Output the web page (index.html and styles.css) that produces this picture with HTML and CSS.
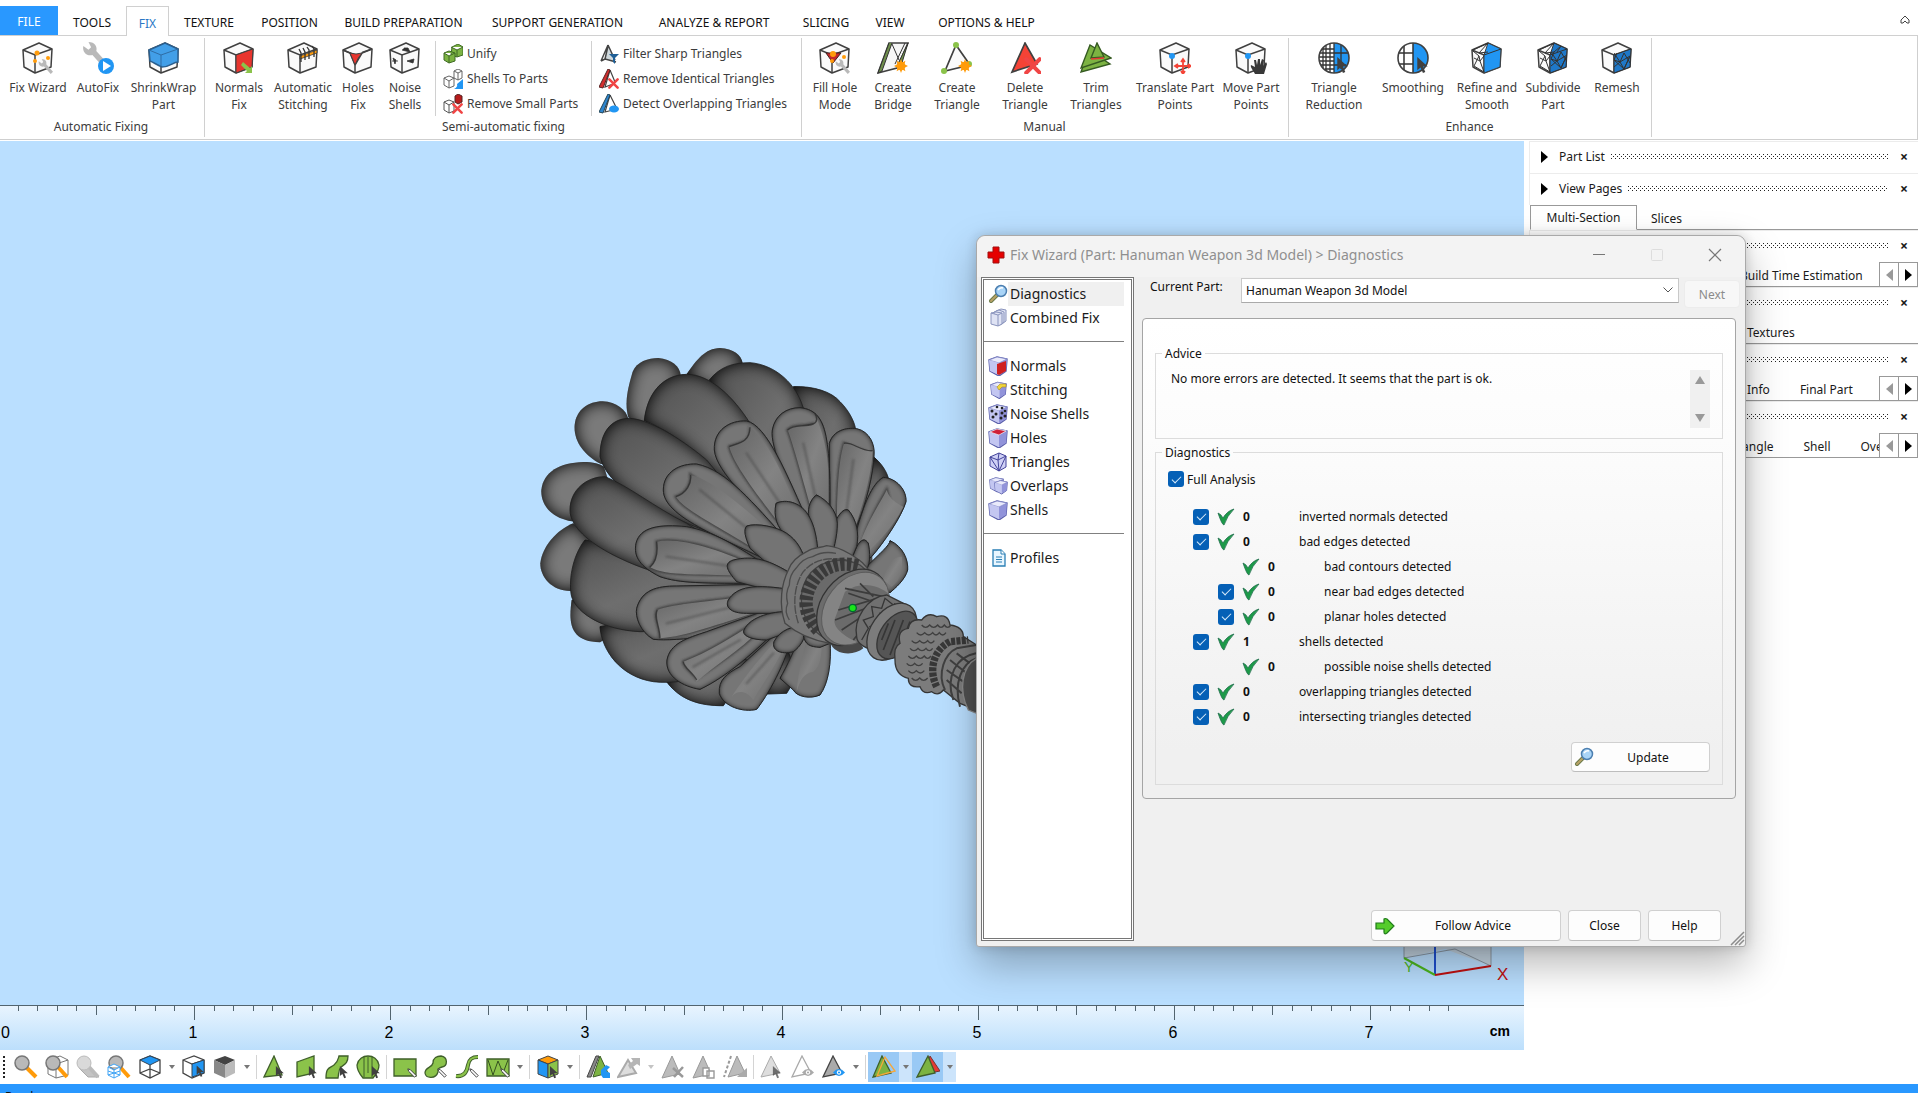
FILE: index.html
```html
<!DOCTYPE html>
<html lang="en">
<head>
<meta charset="utf-8">
<title>Fix Wizard</title>
<link rel="stylesheet" href="styles.css">
</head>
<body>

<svg class="defs" aria-hidden="true">
  <defs>
    <symbol id="cube" viewBox="0 0 32 32"><path d="M17 1 30 7 29 25 13 31 2 25 1 8Z" fill="#fafafa" stroke="#404040" stroke-width="1.5" stroke-linejoin="round"/><path d="M1 8 13 13 30 7M13 13V31" fill="none" stroke="#404040" stroke-width="1.5"/></symbol>
    <symbol id="wrench" viewBox="0 0 20 20"><path d="M1 3 5 6 7 4 5 0C10 0 12 4 11 7L20 17 17 20 8 10C4 11 0 8 1 3Z" fill="#b9b9b9"/></symbol>
    <symbol id="cross" viewBox="0 0 16 16"><path d="M2 2 14 14M14 2 2 14" stroke="#f04545" stroke-width="3.6" stroke-linecap="round"/></symbol>
    <symbol id="spark" viewBox="0 0 16 16"><path d="M8 0 9.500 4 13 2 12 6 16 8 12 10 13 14 9.500 12 8 16 6.500 12 3 14 4 10 0 8 4 6 3 2 6.500 4Z" fill="#ff9b0a"/><circle cx="8" cy="8" r="5" fill="#ff9b0a"/></symbol>
    <symbol id="cursor" viewBox="0 0 12 18"><path d="M1 0V14L4.500 11 7 17 9.500 16 7 10H12Z" fill="#404040"/></symbol>
    <symbol id="pen" viewBox="0 0 12 12"><path d="M1 1 4 2 11 9 9 11 2 4Z" fill="#fff" stroke="#404040" stroke-width="1.200"/></symbol>
    <symbol id="lens" viewBox="0 0 20 20"><path d="M9 11 3 17" stroke="#6b7a4a" stroke-width="4" stroke-linecap="round"/><path d="M9 11 3 17" stroke="#b9a266" stroke-width="2" stroke-linecap="round"/><circle cx="13" cy="7" r="5.500" fill="#a9d4f7" stroke="#4c7fb0" stroke-width="1.500"/><path d="M10 6Q12 3 15 4" stroke="#fff" stroke-width="1.500" fill="none"/></symbol>
    <symbol id="block" viewBox="0 0 20 20"><path d="M1 4 9 1 19 3 18 15 11 20 2 15Z" fill="#c3c5ee" stroke="#5c61ac" stroke-width="1.400"/><path d="M11 7 19 3 18 15 11 19Z" fill="#9193da"/><path d="M1 4 9 1 19 3 11 7Z" fill="#e9eafb" stroke="#7d82c4" stroke-width=".7"/><path d="M1 4 11 7V19L2 15Z" fill="#c3c6f1"/></symbol>
    <symbol id="tick" viewBox="0 0 18 18"><path d="M1 5Q4 6 6 10 10 3 17 1 10 8 7 17 5 17 1 5Z" fill="#1c9a48" stroke="#226f4e" stroke-width=".8"/></symbol>
    <symbol id="eye" viewBox="0 0 14 10"><path d="M0 5Q7-3 14 5 7 13 0 5Z" fill="currentColor"/><circle cx="7" cy="5" r="2.500" fill="#fff"/><circle cx="7" cy="5" r="1.300" fill="currentColor"/></symbol>
    <symbol id="mesh" viewBox="0 0 16 16"><path d="M0 0 6 9 16 3 10 16 6 9 0 14M0 7 6 9 10 0 16 10M3 0 0 7 10 16 16 3" fill="none" stroke="#333" stroke-width="1"/></symbol>
    <filter id="bulge" x="-10%" y="-10%" width="120%" height="120%" color-interpolation-filters="sRGB"><feGaussianBlur in="SourceAlpha" stdDeviation="24"/><feComponentTransfer><feFuncA type="table" tableValues="1 .5 0"/></feComponentTransfer><feComposite in2="SourceAlpha" operator="in" result="s"/><feMerge><feMergeNode in="SourceGraphic"/><feMergeNode in="s"/></feMerge></filter>
    <filter id="bevel" x="-10%" y="-10%" width="120%" height="120%" color-interpolation-filters="sRGB"><feGaussianBlur in="SourceAlpha" stdDeviation="8"/><feComponentTransfer><feFuncA type="table" tableValues="1 .45 0"/></feComponentTransfer><feComposite in2="SourceAlpha" operator="in" result="s"/><feMerge><feMergeNode in="SourceGraphic"/><feMergeNode in="s"/></feMerge></filter>
    <filter id="soft" x="-5%" y="-5%" width="110%" height="110%"><feGaussianBlur stdDeviation="3"/></filter>
    <linearGradient id="plane" x1="0" y1="0" x2="1" y2="1"><stop offset="0" stop-color="#646464"/><stop offset=".5" stop-color="#838383"/><stop offset="1" stop-color="#6c6c6c"/></linearGradient>
    <linearGradient id="lobe" x1="0" y1="0" x2="1" y2="1"><stop offset="0" stop-color="#505050"/><stop offset=".45" stop-color="#6e6e6e"/><stop offset="1" stop-color="#5c5c5c"/></linearGradient>
  </defs>
</svg>

<nav class="tabs">
  <button class="tab file">FILE</button><button class="tab w68">TOOLS</button><button class="tab w43 active">FIX</button><button class="tab w80">TEXTURE</button><button class="tab w81">POSITION</button><button class="tab w147">BUILD PREPARATION</button><button class="tab w161">SUPPORT GENERATION</button><button class="tab w152">ANALYZE &amp; REPORT</button><button class="tab w72">SLICING</button><button class="tab w56">VIEW</button><button class="tab w137">OPTIONS &amp; HELP</button>
  <button class="collapse" aria-label="Collapse ribbon"><svg width="10" height="10" viewBox="0 0 10 10"><path d="M1 5 5 1 9 5V8H7L5 6 3 8H1Z" fill="none" stroke="#444"/></svg></button>
</nav>

<section class="ribbon">
  <div class="group g1">
    <div class="tools">
      <button class="tool w68"><svg viewBox="0 0 32 32"><use href="#cube"/><use href="#wrench" x="16" y="17" width="15" height="15"/><g fill="#ff9b0a"><circle cx="15" cy="11" r="2.500"/><circle cx="13" cy="19" r="2"/><circle cx="26" cy="16" r="2"/></g></svg><span>Fix Wizard</span></button>
      <button class="tool w52"><svg viewBox="0 0 32 32"><use href="#wrench" width="26" height="26"/><circle cx="24" cy="24" r="8" fill="#2196f3"/><path d="M21 19V29L29 24Z" fill="#fff"/></svg><span>AutoFix</span></button>
      <button class="tool w79"><svg viewBox="0 0 32 32"><use href="#cube"/><path d="M17 1 30 7V20C25 20 22 25 14 25 9 23 5 20 2 19L1 8Z" fill="#429fe8" stroke="#2b5f8e" stroke-width="1.500"/><path d="M1 8 13 13 30 7M13 13V24" fill="none" stroke="#2f6da5"/></svg><span>ShrinkWrap<br>Part</span></button>
    </div>
    <div class="caption">Automatic Fixing</div>
  </div>
  <div class="group g2">
    <div class="tools">
      <button class="tool w54"><svg viewBox="0 0 32 32"><use href="#cube"/><path d="M13 13 30 7 29 25 13 31Z" fill="#e8352e" stroke="#404040"/><path d="M20 20 27 26 29 24V31H22L24 29 18 23Z" fill="#8bc34a"/></svg><span>Normals<br>Fix</span></button>
      <button class="tool w74"><svg viewBox="0 0 32 32"><use href="#cube"/><path d="M13 14 30 8V11L13 17Z" fill="#ff9b0a" stroke="#404040" stroke-width=".8"/><path d="M12 7 14 11V20M16 6 18 10V18M20 5 22 8V17M25 4 27 7V15" fill="none" stroke="#333" stroke-width="1.300"/></svg><span>Automatic<br>Stitching</span></button>
      <button class="tool w36"><svg viewBox="0 0 32 32"><use href="#cube"/><path d="M13 14V12L20 10" stroke="#fafafa" stroke-width="3" fill="none"/><path d="M1 8 8 11 13 23M30 7 20 11 13 23" fill="none" stroke="#404040" stroke-width="1.500"/><path d="M8 11Q14 13 20 11 16 15 13 23Z" fill="#e8352e" stroke="#404040"/></svg><span>Holes<br>Fix</span></button>
      <button class="tool w58"><svg viewBox="0 0 32 32"><use href="#cube"/><path d="M13 8 21 10 19 6 15 6M18 19 25 17 24 21ZM4 16 7 18 6 22ZM3 19 9 19" fill="#333" stroke="#333" stroke-width=".8"/></svg><span>Noise<br>Shells</span></button>
      <div class="list l1">
        <button class="row"><svg viewBox="0 0 20 20"><g fill="#7cb342" stroke="#3f6b25"><path d="M9 3 15 0 20 3V11L14 13 8 11ZM8 3 14 6 20 3M14 6V13"/><path d="M1 9 6 7 12 9V17L6 19 1 16ZM1 9 6 12 12 9M6 12V19"/></g></svg>Unify</button>
        <button class="row"><svg viewBox="0 0 20 20"><g fill="#fff" stroke="#666"><path d="M11 2 15 0 19 2V9L15 11 11 9ZM11 2 15 4 19 2M15 4V11"/><path d="M1 9 6 7 11 9V17L6 19 1 16ZM1 9 6 12 11 9M6 12V19"/></g><path d="M20 10V20H11Q15 18 14 15Z" fill="#2196f3"/></svg>Shells To Parts</button>
        <button class="row"><svg viewBox="0 0 20 20"><path d="M12 2 15 0 19 2V8L15 10 12 8Z" fill="#b71c1c" stroke="#522"/><path d="M1 8 6 6 11 8V17L6 19 1 16ZM1 8 6 11 11 8M6 11V19" fill="#fff" stroke="#555"/><use href="#cross" x="9" y="9" width="11" height="11"/></svg>Remove Small Parts</button>
      </div>
      <div class="list l2">
        <button class="row"><svg viewBox="0 0 20 20"><path d="M9 1 2 17M9 1 16 16M9 2 6 15 17 18M2 17 6 15" fill="#cfd8dc" stroke="#444" stroke-width="1.500"/><path d="M10 10H20L16 14V20L14 18V14Z" fill="#1f5f96"/></svg>Filter Sharp Triangles</button>
        <button class="row"><svg viewBox="0 0 20 20"><path d="M11 1 16 13M11 1 6 18 14 15" fill="none" stroke="#444" stroke-width="1.200"/><path d="M9 0 0 18 4 19 11 1Z" fill="#d32f2f" stroke="#522"/><use href="#cross" x="9" y="9" width="11" height="11"/></svg>Remove Identical Triangles</button>
        <button class="row"><svg viewBox="0 0 20 20"><path d="M11 1 18 15M11 1 6 18 14 16" fill="none" stroke="#444" stroke-width="1.200"/><path d="M9 0 0 18 4 19 11 1Z" fill="#2e86d0" stroke="#245"/><ellipse cx="15" cy="15" rx="5" ry="3.500" fill="#2196f3"/></svg>Detect Overlapping Triangles</button>
      </div>
    </div>
    <div class="caption">Semi-automatic fixing</div>
  </div>
  <div class="group g3">
    <div class="tools">
      <button class="tool w56"><svg viewBox="0 0 32 32"><use href="#cube"/><path d="M7 11 22 11 14 21Z" fill="#c62828" stroke="#402020"/><g fill="#ff9b0a"><circle cx="14" cy="12" r="3"/><circle cx="13" cy="19" r="2"/><circle cx="25" cy="15" r="2"/></g><use href="#wrench" x="16" y="17" width="15" height="15"/></svg><span>Fill Hole<br>Mode</span></button>
      <button class="tool w60"><svg viewBox="0 0 32 32"><path d="M12 1H31L20 26 1 31Z" fill="#f6f6f6" stroke="#404040" stroke-width="1.500"/><path d="M12 1 1 31 5 29 15 1M31 1 20 24 24 24ZM28 1 18 22" fill="#6f8f4c" stroke="#333"/><path d="M15 2 22 18" stroke="#333"/><use href="#spark" x="17" y="17" width="14" height="14"/></svg><span>Create<br>Bridge</span></button>
      <button class="tool w68"><svg viewBox="0 0 32 32"><path d="M15 3 29 23 4 29Z" fill="#fafafa" stroke="#404040" stroke-width="1.700"/><g fill="#8bc34a"><circle cx="15" cy="3" r="3"/><circle cx="3" cy="29" r="3"/><circle cx="28" cy="22" r="3"/></g><use href="#spark" x="17" y="17" width="14" height="14"/></svg><span>Create<br>Triangle</span></button>
      <button class="tool w68"><svg viewBox="0 0 32 32"><path d="M16 1 3 30 28 22Z" fill="#f44336" stroke="#404040" stroke-width="1.700"/><use href="#cross" x="15" y="15" width="18" height="18"/></svg><span>Delete<br>Triangle</span></button>
      <button class="tool w74"><svg viewBox="0 0 32 32"><g fill="#7cb342" stroke="#365b22" stroke-width="1.400"><path d="M9 8 1 30 30 22Z"/><path d="M10 3 1 26 31 16Z"/><path d="M17 1 11 16 24 15Z"/></g><path d="M11 17 24 16" stroke="#e53935" stroke-width="1.500"/></svg><span>Trim<br>Triangles</span></button>
      <button class="tool w84"><svg viewBox="0 0 32 32"><use href="#cube"/><circle cx="13" cy="14" r="3" fill="#2196f3"/><path d="M24 18V31M17 24H31M22 20 24 17 26 20M22 29 24 32 26 29M19 22 16 24 19 26M29 22 32 24 29 26" fill="none" stroke="#f44336" stroke-width="1.800"/></svg><span>Translate Part<br>Points</span></button>
      <button class="tool w68"><svg viewBox="0 0 32 32"><use href="#cube"/><circle cx="13" cy="14" r="3" fill="#2196f3"/><path d="M20 32C18 28 15 25 16 23L20 25 19 18H21L22 23 23 17H25V23L27 17 29 18 28 24 31 20 32 22 29 32Z" fill="#383838"/></svg><span>Move Part<br>Points</span></button>
    </div>
    <div class="caption">Manual</div>
  </div>
  <div class="group g4">
    <div class="tools">
      <button class="tool w80"><svg viewBox="0 0 32 32"><circle cx="16" cy="16" r="15" fill="#fff"/><path d="M16 1A15 15 0 0 1 16 31Z" fill="#2196f3"/><path d="M4 7H16M2 11H30M1 15H16M1 19H16M3 23H28M7 27H16M5 6V26M8 3V28M12 2V30M16 1V31M23 3V27" stroke="#333" stroke-width="1.300"/><circle cx="16" cy="16" r="15" fill="none" stroke="#404040" stroke-width="1.600"/><use href="#cursor" x="18" y="15" width="12" height="17"/></svg><span>Triangle<br>Reduction</span></button>
      <button class="tool w78"><svg viewBox="0 0 32 32"><circle cx="16" cy="16" r="15" fill="#fff"/><path d="M16 1A15 15 0 0 1 16 31Z" fill="#2196f3"/><path d="M2 11H16M2 22H16M7 4V28M16 1V31" stroke="#333" stroke-width="1.500"/><circle cx="16" cy="16" r="15" fill="none" stroke="#404040" stroke-width="1.600"/><use href="#cursor" x="19" y="15" width="12" height="17"/></svg><span>Smoothing</span></button>
      <button class="tool w70"><svg viewBox="0 0 32 32"><use href="#cube"/><path d="M17 1 30 7 29 25 13 31V13Z" fill="#2196f3" stroke="#404040"/><path d="M13 13 30 7M2 8 17 1 8 11 17 10M2 9 8 14 3 24 13 30 9 19 13 14M8 14 9 19 3 16" fill="none" stroke="#333"/></svg><span>Refine and<br>Smooth</span></button>
      <button class="tool w62"><svg viewBox="0 0 32 32"><use href="#cube"/><path d="M17 1 30 7 29 25 13 31V13Z" fill="#1f78c8" stroke="#333"/><use href="#mesh" x="14" y="9" width="16" height="18"/><path d="M13 13 30 7M2 8 17 1 8 11 17 10 24 4 20 10M2 9 8 14 3 24 13 30 9 19 13 14M8 14 9 19 3 16" fill="none" stroke="#333"/></svg><span>Subdivide<br>Part</span></button>
      <button class="tool w66"><svg viewBox="0 0 32 32"><use href="#cube"/><path d="M13 13 30 7 29 25 13 31Z" fill="#1f78c8" stroke="#333"/><use href="#mesh" x="13" y="11" width="16" height="16"/></svg><span>Remesh</span></button>
    </div>
    <div class="caption">Enhance</div>
  </div>
</section>

<main class="work">
  <section class="scene">
    <div class="canvas">
      <svg class="model" width="470" height="400" viewBox="0 0 1410 1200" role="img" aria-label="Part model">
        <g fill="#7a7a7a" filter="url(#bulge)"><path d="M500 132C530 90 555 55 600 54 640 56 665 75 668 100L600 190Z"/></g>
        <g fill="#7a7a7a" filter="url(#bulge)"><path d="M325 262C312 215 325 170 338 125 350 95 385 84 415 84 455 88 480 110 482 135L420 330Z"/></g>
        <g fill="#7a7a7a" filter="url(#bulge)"><path d="M243 402C190 375 160 330 164 285 168 240 205 214 248 214 290 216 318 240 325 266L300 400Z"/></g>
        <g fill="#7a7a7a" filter="url(#bulge)"><path d="M155 574C100 565 62 530 64 480 70 425 120 398 190 396 220 396 240 402 252 410L280 500Z"/></g>
        <g fill="#7a7a7a" filter="url(#bulge)"><path d="M155 783C95 785 60 740 61 700 66 650 110 600 160 580L220 640 200 760Z"/></g>
        <g fill="#7a7a7a" filter="url(#bulge)"><path d="M155 810C145 880 150 935 240 937L300 900 200 800Z"/></g>
        <path d="M400 300 700 180 900 300 1040 480 1060 720 900 960 780 1060 600 1060 400 1000 300 700Z" fill="#4a4a4a"/>
        <g fill="url(#lobe)" stroke="#333" stroke-width="2">
          <path filter="url(#bulge)" d="M820 170C880 168 935 185 960 215 990 245 1005 280 1007 300L980 600 850 500Z"/>
          <path filter="url(#bulge)" d="M1060 380C1085 400 1100 425 1105 445L1030 650 1000 500Z"/>
          <path filter="url(#bulge)" d="M568 150C600 110 640 98 690 98 770 105 830 165 850 235L900 600 800 560 680 330Z"/>
          <path filter="url(#bulge)" d="M440 1055C480 1110 540 1128 610 1127L700 1000 600 950Z"/>
          <path filter="url(#bulge)" d="M240 890C245 960 300 1040 400 1055 460 1062 520 1050 560 1030L760 880 500 840Z"/>
          <path filter="url(#bulge)" d="M195 630C155 680 145 760 155 800 170 850 250 900 360 905 500 905 650 850 760 800L500 680Z"/>
          <path filter="url(#bulge)" d="M373 272C380 200 420 135 500 133 570 133 640 200 690 280L850 600 740 560 560 400C490 330 420 290 373 272Z"/>
          <path filter="url(#bulge)" d="M240 380C240 310 270 265 330 265 400 270 500 340 560 390L800 680 600 620C480 570 270 500 240 380Z"/>
          <path filter="url(#bulge)" d="M150 540C150 480 200 440 255 440 330 470 400 530 500 580L720 720 500 750C380 730 150 640 150 540Z"/>
          <path filter="url(#bulge)" d="M730 1060 740 1092 800 1090 830 1040 800 950Z"/>
        </g>
        <g fill="#767676" stroke="#3a3a3a" stroke-width="3">
          <path filter="url(#bevel)" d="M1010 600C1030 530 1055 460 1090 442 1130 445 1160 480 1158 515 1145 560 1090 640 1055 680L1000 720Z"/>
          <path filter="url(#bevel)" d="M1040 710C1080 670 1110 645 1110 632 1150 650 1165 690 1163 720 1155 750 1125 775 1110 788L1050 760Z"/>
          <path filter="url(#bevel)" d="M930 600 928 340C940 300 980 292 1010 296 1050 305 1065 345 1062 375 1060 430 1040 520 1005 600L950 700Z"/>
          <path filter="url(#bevel)" d="M870 600C800 460 750 350 757 300 765 255 800 233 840 233 890 238 910 270 920 330 932 400 930 480 928 620Z"/>
          <path filter="url(#bevel)" d="M800 640C700 520 590 430 583 360 580 300 630 270 680 273 740 285 800 430 870 590L880 680Z"/>
          <path filter="url(#bevel)" d="M760 700C600 620 430 560 430 480 430 425 480 400 530 402 620 420 700 520 800 630Z"/>
          <path filter="url(#bevel)" d="M740 760C540 760 480 760 420 740 360 710 340 680 348 640 360 590 420 582 500 590 580 605 640 640 760 720Z"/>
          <path filter="url(#bevel)" d="M760 870C640 915 470 935 400 928 360 905 345 860 350 835 365 780 410 768 470 768L760 762Z"/>
          <path filter="url(#bevel)" d="M780 890C700 970 620 1040 540 1078 490 1070 435 1040 441 990 450 940 500 925 560 905L740 840Z"/>
          <path filter="url(#bevel)" d="M820 900C800 1000 740 1100 710 1138 670 1148 610 1130 598 1090 595 1050 620 1030 660 1010L780 900Z"/>
          <path filter="url(#bevel)" d="M930 930C935 1000 925 1060 900 1095 870 1108 830 1100 820 1080L780 1045C800 1010 830 950 845 900Z"/>
        </g>
        <g fill="#303030" stroke="#303030" stroke-width="9" opacity=".75" filter="url(#soft)">
          <path d="M890 600C850 450 815 330 803 300 820 282 850 292 880 282L915 440V600Z"/>
          <path d="M800 610C700 480 640 400 628 350 650 340 690 340 690 305L850 590Z"/>
          <path d="M740 680C600 590 490 540 468 500 500 490 515 460 512 435L780 640Z"/>
          <path d="M700 735C540 730 440 740 390 712 415 690 412 650 410 635 480 620 600 660 710 710Z"/>
          <path d="M700 850C600 880 500 920 420 920 420 890 400 860 412 840 460 820 580 815 700 795Z"/>
          <path d="M720 900C660 960 580 1010 530 1045 520 1030 490 1010 490 995 560 970 640 920 700 880Z"/>
          <path d="M950 640C950 440 960 380 972 340L1045 370 1000 600Z"/>
          <path d="M1030 630C1050 560 1080 520 1100 480L1120 560Z"/>
        </g>
        <g fill="url(#plane)">
          <path d="M890 600C850 450 815 330 803 300 820 282 850 292 880 282 895 275 890 262 885 255 905 300 925 360 925 440L925 600Z"/>
          <path d="M800 610C700 480 640 400 628 350 650 340 690 340 690 292 760 350 800 460 850 590Z"/>
          <path d="M740 680C600 590 490 540 468 500 500 490 515 460 512 435 580 450 680 540 780 630Z"/>
          <path d="M700 740C540 730 440 740 390 712 415 690 412 650 410 635 480 620 600 660 710 710Z"/>
          <path d="M700 850C600 880 500 920 420 925 420 890 400 860 412 840 460 820 580 815 700 795Z"/>
          <path d="M720 900C660 960 580 1010 530 1055 520 1030 490 1010 490 995 560 970 640 920 700 880Z"/>
          <path d="M800 930C770 1010 720 1070 700 1110 680 1080 650 1080 635 1100 660 1060 720 980 780 920Z"/>
          <path d="M905 940C905 980 900 1010 880 1025 850 1030 840 1050 830 1085 835 1020 850 970 860 930Z"/>
          <path d="M950 640C950 440 960 380 972 340 1000 335 1020 365 1058 362 1055 430 1030 520 1000 610Z"/>
          <path d="M1020 640C1050 560 1080 520 1100 480 1110 510 1130 520 1150 530 1120 590 1080 630 1050 660Z"/>
          <path d="M1090 750C1100 700 1120 680 1145 680 1150 720 1140 750 1115 770Z"/>
        </g>
        <g fill="none" stroke="#2e2e2e" stroke-width="4" opacity=".8">
          <path d="M803 300C820 282 850 292 880 282 895 275 890 262 885 250M628 350C650 340 690 340 690 292M468 500C500 490 515 460 512 435M390 712C415 690 412 650 410 635M420 925C420 890 400 860 412 840M530 1050C520 1030 490 1010 490 995M972 340C1000 335 1020 365 1058 362"/>
        </g>
        <g fill="none" stroke="#4e4e4e" stroke-width="7" opacity=".6" stroke-linecap="round" filter="url(#soft)">
          <path d="M850 340 895 540M680 370 800 550M540 480 700 610M440 680 640 710M440 880 640 830M520 1010 660 930M680 1060 760 970M1000 390 980 540"/>
        </g>
        <g fill="#747474" stroke="#3c3c3c" stroke-width="3">
          <path filter="url(#bevel)" d="M1010 650C1025 625 1035 625 1045 640 1055 690 1045 720 1030 725L980 720Z"/>
          <path filter="url(#bevel)" d="M948 570C965 540 975 537 985 540 1010 570 1018 610 1010 650L980 720 930 700Z"/>
          <path filter="url(#bevel)" d="M865 550C865 520 880 500 890 495 920 510 950 540 952 580 952 620 940 660 930 700L890 680Z"/>
          <path filter="url(#bevel)" d="M860 548C840 520 800 505 768 520 760 560 770 590 800 620L840 710 895 680C890 600 875 570 860 548Z"/>
          <path filter="url(#bevel)" d="M690 655C675 620 670 600 680 588 710 578 770 590 800 610 830 630 850 660 860 710L810 760Z"/>
          <path filter="url(#bevel)" d="M650 755C620 720 610 700 640 690 700 675 750 690 820 735L820 800Z"/>
          <path filter="url(#bevel)" d="M680 850C630 850 615 830 625 810 650 770 700 760 820 780L830 850Z"/>
          <path filter="url(#bevel)" d="M740 930C690 930 665 915 672 900 690 860 760 840 830 845L850 890Z"/>
          <path filter="url(#bevel)" d="M820 965C780 975 755 960 762 935 780 900 820 885 860 890 855 930 840 950 820 965Z"/>
          <path filter="url(#bevel)" d="M900 952C870 950 855 945 850 915L930 900V940Z"/>
        </g>
        <path d="M795 880C775 820 785 760 805 720 815 690 840 675 860 665 880 650 900 655 920 647 950 650 970 660 990 672 1020 690 1040 705 1050 730L930 940C870 930 830 910 795 880Z" fill="#777" stroke="#464646" stroke-width="4"/>
        <g fill="none" stroke="#4c4c4c"><path d="M808 870q-16-25-5-50-8-30 5-55 0-30 20-50 20-30 50-35 30-18 70-10" stroke-width="4"/><path d="M835 880C815 820 825 760 850 725 880 690 920 680 980 690" stroke-width="4" stroke-dasharray="26 3"/></g>
        <path d="M915 925C840 880 830 800 860 745 890 695 960 675 1020 705L1050 730Z" fill="#6a6a6a" stroke="#444" stroke-width="4"/>
        <path d="M895 900C845 850 850 790 885 745 918 704 970 694 1020 709" fill="none" stroke="#3a3a3a" stroke-width="40" stroke-dasharray="13 7"/>
        <path d="M930 935C940 975 1000 980 1030 955L1010 920Z" fill="#484848"/>
        <ellipse cx="996" cy="832" rx="92" ry="126" transform="rotate(38 996 832)" fill="#6c6c6c" stroke="#333" stroke-width="4"/>
        <ellipse cx="1006" cy="836" rx="88" ry="120" transform="rotate(38 1006 836)" fill="#848484" stroke="#5c5c5c" stroke-width="3"/>
        <path d="M975 785C1020 755 1070 760 1110 795L1020 940C970 920 935 890 945 865Z" fill="#6b6b6b"/>
        <path d="M975 775 1090 800M985 790 1060 815M955 840 1090 800M945 870 1050 830M965 900 1040 850M1000 930 1040 880M1020 760 1060 800" stroke="#3c3c3c" stroke-width="5"/>
        <g fill="#707070" stroke="#363636" stroke-width="4">
          <path d="M1010 920C1000 870 1040 800 1100 795L1150 820 1070 960C1040 960 1010 940 1010 920Z"/>
          <path d="M1025 930 1045 895 1030 870 1060 860 1055 830 1085 835 1095 805 1120 825M1050 950 1068 915 1050 890 1085 880 1080 850 1110 855 1125 820" fill="none"/>
          <ellipse cx="1115" cy="905" rx="62" ry="95" transform="rotate(35 1115 905)" fill="#7c7c7c"/>
          <ellipse cx="1132" cy="915" rx="50" ry="80" transform="rotate(35 1132 915)" fill="#555"/>
          <path d="M1090 960 1125 870M1110 975 1150 870M1130 980 1170 875M1085 930 1105 880" stroke-width="5"/>
          <path d="M1125 990Q1120 950 1140 940 1130 900 1165 895 1170 865 1205 870 1225 845 1250 860 1285 850 1290 885 1330 890 1330 920L1370 945V1140L1320 1120 1270 1080Q1255 1100 1235 1085 1210 1095 1200 1070 1165 1075 1165 1045 1125 1035 1125 990Z" fill="#7c7c7c"/>
        </g>
        <g fill="none" stroke="#404040" stroke-width="4">
          <path d="M1170 955q12 14 24 0q12 14 24 0q10 14 20 0M1165 978q12 14 24 0q12 14 24 0q10 14 20 0M1160 1000q12 14 24 0q12 14 24 0M1165 1022q12 14 24 0q12 14 24 0M1175 1044q12 14 24 0q12 14 24 0M1175 932q12 14 24 0q12 14 24 0q10 14 20 0M1190 908q12 14 24 0q12 14 24 0q10 14 20 0q10 14 20 0M1205 885q12 14 24 0q12 14 24 0q10 14 20 0q10 14 20 0"/>
          <path d="M1250 1070C1225 1020 1240 960 1290 935L1345 930" stroke="#383838" stroke-width="22" stroke-dasharray="12 4"/>
          <path d="M1275 1080C1250 1030 1275 970 1310 955L1368 945M1300 1110C1275 1040 1310 980 1368 970M1320 1130C1300 1060 1325 1000 1368 985M1290 990l50 40M1280 1020l50 35M1280 1050l45 40M1310 970l40 30" stroke-width="6"/>
        </g>
        <path d="M1370 985C1325 1010 1315 1080 1345 1140L1370 1150Z" fill="#505050" stroke="#8a8a8a" stroke-width="4"/>
        <circle cx="998" cy="834" r="11" fill="#19e619" stroke="#063" stroke-width="4"/>
      </svg>
      <svg class="axes" width="120" height="50" viewBox="0 0 120 50" role="img" aria-label="Axes">
        <path d="M9 0V23L50 14 96 31V0Z" fill="#c3d3e0"/><path d="M9 0V23M96 0V31M9 23 60 14 96 31" fill="none" stroke="#8a97a3"/>
        <path d="M40 40V0" stroke="#1f4fd0" stroke-width="2"/><path d="M40 40 9 23" stroke="#4cb71f" stroke-width="2"/><path d="M40 40 96 31" stroke="#c01010" stroke-width="2"/>
        <text x="9" y="37" fill="#4cb71f">Y</text><text x="102" y="45" fill="#c01010" class="axis-x">X</text>
      </svg>
    </div>
    <div class="ruler">
      <svg class="ticks" height="16" aria-hidden="true"><defs><pattern id="cm" x="-2" width="196" height="16" patternUnits="userSpaceOnUse"><path d="M.5 0V14M98.500 0V9M20.500 0V5M39.500 0V5M59.500 0V5M78.500 0V5M118.500 0V5M137.500 0V5M157.500 0V5M176.500 0V5" stroke="#52646f"/></pattern></defs><rect width="1450" height="16" fill="url(#cm)"/></svg>
      <div class="marks"><span class="zero">0</span><span>1</span><span>2</span><span>3</span><span>4</span><span>5</span><span>6</span><span>7</span><b>cm</b></div>
    </div>
  </section>

  <aside class="panels">
    <div class="head"><span class="fold"></span>Part List<i class="dots"></i><button class="x" aria-label="Close Part List">×</button></div>
    <div class="head"><span class="fold"></span>View Pages<i class="dots"></i><button class="x" aria-label="Close View Pages">×</button></div>
    <div class="subtabs first"><button class="sub on">Multi-Section</button><button class="sub">Slices</button></div>
    <div class="head"><i class="dots"></i><button class="x" aria-label="Close">×</button></div>
    <div class="subtabs under build"><button class="sub">Build Time Estimation</button><span class="scroll"><button aria-label="Previous"><i class="prev"></i></button><button aria-label="Next"><i class="next"></i></button></span></div>
    <div class="head"><i class="dots"></i><button class="x" aria-label="Close">×</button></div>
    <div class="subtabs under"><button class="sub">Textures</button></div>
    <div class="head"><i class="dots"></i><button class="x" aria-label="Close">×</button></div>
    <div class="subtabs under"><button class="sub">Info</button><button class="sub">Final Part</button><span class="scroll"><button aria-label="Previous"><i class="prev"></i></button><button aria-label="Next"><i class="next"></i></button></span></div>
    <div class="head"><i class="dots"></i><button class="x" aria-label="Close">×</button></div>
    <div class="subtabs under wide"><button class="sub">Triangle</button><button class="sub">Shell</button><button class="sub">Overlap</button><span class="scroll"><button aria-label="Previous"><i class="prev"></i></button><button aria-label="Next"><i class="next"></i></button></span></div>
  </aside>
</main>

<footer class="bar">
  <i class="grip"></i>
  <button aria-label="Zoom"><svg viewBox="0 0 24 24"><path d="M12 12 22 22" stroke="#ff9b0a" stroke-width="4"/><circle cx="8" cy="8" r="7" fill="#b9b9b9" stroke="#777" stroke-width="1.500"/></svg></button>
  <button aria-label="Zoom part"><svg viewBox="0 0 24 24"><path d="M6 4 15 1 23 5V20L11 23 3 19V8M23 5 11 9V23" fill="none" stroke="#777"/><path d="M13 12 22 22" stroke="#ff9b0a" stroke-width="4"/><circle cx="8" cy="8" r="7" fill="#b9b9b9" stroke="#777" stroke-width="1.500"/></svg></button>
  <button aria-label="Unzoom"><svg viewBox="0 0 24 24"><path d="M3 13H14L23 22H12Z" fill="#c4c4c4" stroke="#aaa"/><path d="M13 12 22 22" stroke="#bbb" stroke-width="4"/><circle cx="8" cy="8" r="7" fill="#d9d9d9" stroke="#bbb"/></svg></button>
  <button aria-label="Zoom selection"><svg viewBox="0 0 24 24"><path d="M13 12 22 22" stroke="#ff9b0a" stroke-width="4"/><circle cx="9" cy="8" r="7" fill="#b9b9b9" stroke="#777" stroke-width="1.500"/><path d="M1 12 7 9 13 12V20L7 23 1 20ZM1 12 7 15 13 12M7 15V23M1 16 13 20M13 16 1 20" fill="#fff" stroke="#42a5f5"/></svg></button>
  <button aria-label="View"><svg viewBox="0 0 24 24"><path d="M2 5 12 1 22 5V18L12 23 2 18ZM12 10V23M2 18 12 14 22 18" fill="#fff" stroke="#444" stroke-width="1.300"/><path d="M2 5 12 1 22 5 12 10Z" fill="#2196f3" stroke="#345"/></svg></button><i class="drop"></i>
  <button aria-label="Pick plane"><svg viewBox="0 0 24 24"><path d="M1 5 12 1 22 5V18L10 23 1 18ZM1 5 10 9 22 5" fill="#fff" stroke="#444" stroke-width="1.300"/><path d="M10 9 22 5V18L10 22Z" fill="#2196f3" stroke="#345"/><use href="#cursor" x="14" y="10" width="8" height="13"/></svg></button>
  <button aria-label="Shading"><svg viewBox="0 0 24 24"><path d="M1 5 12 1 22 5 12 10Z" fill="#444"/><path d="M1 5 12 10V23L1 18Z" fill="#888"/><path d="M12 10 22 5V18L12 23Z" fill="#bbb"/></svg></button><i class="drop"></i><i class="sep"></i>
  <button aria-label="Mark triangle"><svg viewBox="0 0 24 24"><path d="M11 1 1 22 19 20Z" fill="#8bc34a" stroke="#3f5f2a" stroke-width="1.300"/><use href="#cursor" x="12" y="11" width="9" height="13"/></svg></button>
  <button aria-label="Mark plane"><svg viewBox="0 0 24 24"><path d="M3 7 20 1V18L3 22Z" fill="#8bc34a" stroke="#3f5f2a" stroke-width="1.300"/><use href="#cursor" x="14" y="11" width="9" height="13"/></svg></button>
  <button aria-label="Mark surface"><svg viewBox="0 0 24 24"><path d="M14 1H23C23 8 20 9 16 12 13 15 14 18 13 23H1C1 12 5 13 9 10 13 7 13 5 14 1Z" fill="#8bc34a" stroke="#3f5f2a" stroke-width="1.300"/><use href="#cursor" x="14" y="11" width="9" height="13"/></svg></button>
  <button aria-label="Mark shell"><svg viewBox="0 0 24 24"><path d="M7 23Q1 16 1 10C2 4 7 1 12 1S22 4 23 10Q23 16 17 23Z" fill="#8bc34a" stroke="#3f5f2a" stroke-width="1.300"/><path d="M8 22V2M12 18V2M16 22V2" stroke="#3f5f2a"/><use href="#cursor" x="15" y="11" width="9" height="13"/></svg></button><i class="sep"></i>
  <button aria-label="Rectangle mark"><svg viewBox="0 0 24 24"><path d="M1 4H23V21H1Z" fill="#8bc34a" stroke="#3f5f2a" stroke-width="1.300"/><use href="#pen" x="14" y="13" width="10" height="10"/></svg></button>
  <button aria-label="Brush mark"><svg viewBox="0 0 24 24"><path d="M9 8C9 3 13 1 17 1 24 2 24 11 18 12 14 13 14 14 14 17 12 24 2 24 1 18 1 12 8 13 9 8Z" fill="#8bc34a" stroke="#3f5f2a" stroke-width="1.300"/><use href="#pen" x="13" y="13" width="10" height="10"/></svg></button>
  <button aria-label="Curve mark"><svg viewBox="0 0 24 24"><path d="M1 21C9 22 12 17 13 10 14 4 17 2 23 2" fill="none" stroke="#3f5f2a" stroke-width="4"/><path d="M1 21C9 22 12 17 13 10 14 4 17 2 23 2" fill="none" stroke="#8bc34a" stroke-width="2"/><use href="#pen" x="14" y="13" width="10" height="10"/></svg></button>
  <button aria-label="Window mark"><svg viewBox="0 0 24 24"><path d="M1 4H23V21H1Z" fill="#8bc34a" stroke="#3f5f2a" stroke-width="1.300"/><path d="M2 5 7 20 12 6 17 18 22 5" fill="none" stroke="#345020"/><use href="#pen" x="14" y="13" width="10" height="10"/></svg></button><i class="drop"></i><i class="sep"></i>
  <button aria-label="Colour cube"><svg viewBox="0 0 24 24"><path d="M2 5 12 1 22 5 12 9Z" fill="#ff9b0a" stroke="#444"/><path d="M2 5 12 9V23L2 19Z" fill="#2196f3" stroke="#444"/><path d="M12 9 22 5V19L12 23Z" fill="#8bc34a" stroke="#444"/><use href="#cursor" x="13" y="11" width="9" height="13"/></svg></button><i class="drop"></i><i class="sep"></i>
  <button aria-label="Invert"><svg viewBox="0 0 24 24"><path d="M10 1 1 22H5L13 1Z" fill="#888" stroke="#444"/><path d="M14 1 7 22 22 18Z" fill="#7cb342" stroke="#3f5f2a"/><path d="M15 15 20 10 24 12 20 16 24 18V23H17L15 20Z" fill="#2196f3"/></svg></button>
  <button aria-label="Expand" disabled><svg viewBox="0 0 24 24"><path d="M11 5 1 22 19 18Z" fill="#ddd" stroke="#aaa" stroke-width="2"/><path d="M14 3H23V11L20 9 13 14 11 10 16 6Z" fill="#b5b5b5"/></svg></button><i class="drop dim"></i>
  <button aria-label="Delete marked" disabled><svg viewBox="0 0 24 24"><path d="M11 1 1 23 19 19Z" fill="#bbb" stroke="#999"/><path d="M12 13 22 22M22 12 13 22" stroke="#999" stroke-width="2.500"/></svg></button>
  <button aria-label="Copy marked" disabled><svg viewBox="0 0 24 24"><path d="M11 1 1 23 19 19Z" fill="#bbb" stroke="#999"/><path d="M11 13H17V21H11ZM15 16H22V23H15Z" fill="#fff" stroke="#999" stroke-width="1.400"/></svg></button>
  <button aria-label="Separate marked" disabled><svg viewBox="0 0 24 24"><path d="M8 1 1 22" stroke="#999" stroke-width="2" stroke-dasharray="3 2"/><path d="M14 1 5 22 22 18Z" fill="#bbb" stroke="#999"/><path d="M24 13V22H14L18 18Z" fill="#aaa"/></svg></button><i class="sep"></i>
  <button aria-label="Hide marked"><svg viewBox="0 0 24 24"><path d="M11 1 1 22 20 18Z" fill="#ddd" stroke="#aaa"/><use href="#cursor" x="12" y="11" width="9" height="13" opacity=".7"/></svg></button>
  <button aria-label="Show"><svg viewBox="0 0 24 24" color="#aaa"><path d="M11 1 1 22 20 18Z" fill="#fff" stroke="#aaa" stroke-width="1.300"/><use href="#eye" x="11" y="13" width="12" height="9"/></svg></button>
  <button aria-label="Show marked"><svg viewBox="0 0 24 24" color="#2196f3"><path d="M11 1 1 22 20 18Z" fill="#aaa" stroke="#444" stroke-width="1.300"/><use href="#eye" x="11" y="13" width="12" height="9"/></svg></button><i class="drop"></i><i class="sep"></i>
  <button class="hot" aria-label="Triangle edges"><svg viewBox="0 0 24 24"><path d="M10 1 1 22 19 18Z" fill="#7cb342" stroke="#3f5f2a" stroke-width="1.300"/><path d="M13 2 5 21 23 16Z" fill="none" stroke="#f5a83a" stroke-width="1.300"/></svg></button><i class="drop hot2"></i>
  <button class="hot" aria-label="Inverted triangles"><svg viewBox="0 0 24 24"><path d="M14 1 9 19 24 16Z" fill="#e53935" stroke="#733"/><path d="M12 1 1 22 19 18Z" fill="#7cb342" stroke="#3f5f2a" stroke-width="1.300"/></svg></button><i class="drop hot2"></i>
</footer>
<div class="status">Ready</div>

<section class="dialog" role="dialog" aria-labelledby="dt">
  <header class="title">
    <svg width="18" height="18" viewBox="0 0 18 18"><path d="M6 1H12V6H17V12H12V17H6V12H1V6H6Z" fill="#e60000" stroke="#a01010"/></svg>
    <h1 id="dt">Fix Wizard (Part: Hanuman Weapon 3d Model) &gt; Diagnostics</h1>
    <button class="win" aria-label="Minimize"><svg viewBox="0 0 14 14"><path d="M1 6.500H13" stroke="#777"/></svg></button>
    <button class="win" aria-label="Maximize" disabled><svg viewBox="0 0 14 14"><rect x="1.500" y="1.500" width="11" height="11" rx="1" fill="none" stroke="#ddd"/></svg></button>
    <button class="win" aria-label="Close window"><svg viewBox="0 0 14 14"><path d="M1 1 13 13M13 1 1 13" stroke="#777" stroke-width="1.200"/></svg></button>
  </header>
  <div class="columns">
    <nav class="pages">
      <button class="page cur"><svg viewBox="0 0 20 20"><use href="#lens"/></svg><span>Diagnostics</span></button>
      <button class="page"><svg viewBox="0 0 20 20"><g fill="#dfe3f4" stroke="#8a94bd"><path d="M8 3 13 1 18 2V13L14 16 8 14Z"/><path d="M6 4 11 2 16 4V14L12 17 6 15Z"/><path d="M3 5 8 4 14 5V16L10 18 3 16ZM3 5 10 7 14 5M10 7V18"/></g></svg><span>Combined Fix</span></button>
      <hr>
      <button class="page"><svg viewBox="0 0 20 20"><use href="#block"/><path d="M9 8 18 5V15L11 19 9 18Z" fill="#cf2020"/></svg><span>Normals</span></button>
      <button class="page"><svg viewBox="0 0 20 20"><use href="#block" x="2" y="1" width="17" height="18"/><path d="M9 7 12 4H18V7H14L11 10Z" fill="#f2d63a" stroke="#a98c22" stroke-width=".6"/></svg><span>Stitching</span></button>
      <button class="page"><svg viewBox="0 0 20 20"><use href="#block"/><g fill="#222"><circle cx="4" cy="7" r="1.500"/><circle cx="8" cy="10" r="1.500"/><circle cx="5" cy="13" r="1.500"/><circle cx="9" cy="3" r="1.300"/><circle cx="14" cy="4" r="1.300"/><circle cx="14" cy="9" r="1.500"/><circle cx="17" cy="7" r="1.300"/><circle cx="13" cy="14" r="1.500"/><circle cx="17" cy="12" r="1.500"/></g></svg><span>Noise Shells</span></button>
      <button class="page"><svg viewBox="0 0 20 20"><use href="#block"/><path d="M2 4 9 1 18 3 11 7Z" fill="#cf2038" stroke="#fff" stroke-width=".6"/></svg><span>Holes</span></button>
      <button class="page"><svg viewBox="0 0 20 20"><path d="M2 5 11 1 18 4V15L11 19 2 14Z" fill="#cfd0f5" stroke="#43439a"/><path d="M2 5 10 8 18 4 11 19 2 5M10 8 11 1M10 8 11 19" fill="none" stroke="#43439a"/></svg><span>Triangles</span></button>
      <button class="page"><svg viewBox="0 0 20 20"><use href="#block" x="1" y="0" width="15" height="17"/><use href="#block" x="6" y="3" width="14" height="16"/></svg><span>Overlaps</span></button>
      <button class="page"><svg viewBox="0 0 20 20"><use href="#block"/></svg><span>Shells</span></button>
      <hr>
      <button class="page"><svg viewBox="0 0 20 20"><path d="M5 2H13L17 6V18H5Z" fill="#e8f6ff" stroke="#2a7fb5" stroke-width="1.300"/><path d="M13 2V6H17" fill="#fff" stroke="#2a7fb5"/><path d="M8 9H14M8 11.500H14M8 14H14" stroke="#2a7fb5" stroke-width="1.200"/></svg><span>Profiles</span></button>
    </nav>
    <div class="body">
      <div class="part">
        <label for="cp">Current Part:</label>
        <span class="combo"><select id="cp"><option>Hanuman Weapon 3d Model</option></select><svg viewBox="0 0 10 6"><path d="M0.500 .5 5 5 9.500 .5" fill="none" stroke="#555"/></svg></span>
        <button class="btn nextbtn" disabled>Next</button>
      </div>
      <div class="sheet">
        <fieldset class="advice"><legend>Advice</legend><p>No more errors are detected. It seems that the part is ok.</p><span class="vbar"><i class="up"></i><i class="down"></i></span></fieldset>
        <fieldset class="diag"><legend>Diagnostics</legend>
          <label class="full"><input type="checkbox" checked>Full Analysis</label>
          <label class="check"><input type="checkbox" checked><svg><use href="#tick"/></svg><b>0</b>inverted normals detected</label>
          <label class="check"><input type="checkbox" checked><svg><use href="#tick"/></svg><b>0</b>bad edges detected</label>
          <div class="check in nobox"><svg><use href="#tick"/></svg><b>0</b>bad contours detected</div>
          <label class="check in"><input type="checkbox" checked><svg><use href="#tick"/></svg><b>0</b>near bad edges detected</label>
          <label class="check in"><input type="checkbox" checked><svg><use href="#tick"/></svg><b>0</b>planar holes detected</label>
          <label class="check"><input type="checkbox" checked><svg><use href="#tick"/></svg><b>1</b>shells detected</label>
          <div class="check in nobox"><svg><use href="#tick"/></svg><b>0</b>possible noise shells detected</div>
          <label class="check"><input type="checkbox" checked><svg><use href="#tick"/></svg><b>0</b>overlapping triangles detected</label>
          <label class="check"><input type="checkbox" checked><svg><use href="#tick"/></svg><b>0</b>intersecting triangles detected</label>
          <button class="btn update"><svg viewBox="0 0 20 20"><use href="#lens"/></svg><span>Update</span></button>
        </fieldset>
      </div>
      <div class="actions">
        <button class="btn follow"><svg viewBox="0 0 20 18"><path d="M1 6H9V2Q10 1 12 2L19 9 12 16Q9 18 9 15V12H1Z" fill="#55cc2c" stroke="#1f7a1a" stroke-width="1.200"/></svg><span>Follow Advice</span></button>
        <button class="btn small">Close</button>
        <button class="btn small">Help</button>
      </div>
    </div>
  </div>
  <svg class="resize" width="16" height="16" viewBox="0 0 16 16"><path d="M2 15 15 2M6 15 15 6M10 15 15 10" stroke="#8c8c8c" stroke-width="1.500"/></svg>
</section>
</body>
</html>
```
FILE: styles.css
```css
* { box-sizing: border-box; }
body { margin: 0; height: 100vh; display: flex; flex-direction: column; overflow: hidden; position: relative; background: #fff; color: #111; font: 12px/17px "Noto Sans", "Open Sans", sans-serif; }
button { margin: 0; padding: 0; border: 0; background: none; color: inherit; font: inherit; white-space: nowrap; }
.defs { position: absolute; width: 0; height: 0; }

/* ribbon tabs */
.tabs { display: flex; height: 36px; padding-top: 6px; border-bottom: 1px solid #d0d0d0; flex: none; }
.tab { height: 29px; padding-top: 3px; }
.tab.file { width: 58px; padding-top: 1px; background: #2998ff; color: #fff; }
.tab.active { height: 30px; background: #fff; border: 1px solid #d0d0d0; border-bottom: 0; color: #2b78c5; }
.collapse { margin-left: auto; margin-right: 8px; height: 28px; width: 10px; }
.collapse svg { display: block; }
.w36 { width: 36px; } .w43 { width: 43px; } .w52 { width: 52px; } .w54 { width: 54px; } .w56 { width: 56px; }
.w58 { width: 58px; } .w60 { width: 60px; } .w62 { width: 62px; } .w66 { width: 66px; } .w68 { width: 68px; }
.w70 { width: 70px; } .w72 { width: 72px; } .w74 { width: 74px; } .w78 { width: 78px; } .w79 { width: 79px; }
.w80 { width: 80px; } .w81 { width: 81px; } .w84 { width: 84px; } .w137 { width: 137px; } .w147 { width: 147px; }
.w152 { width: 152px; } .w161 { width: 161px; }

/* ribbon */
.ribbon { display: flex; flex: none; height: 104px; padding-top: 2px; border-bottom: 1px solid #cfcfcf; border-right: 1px solid #cfcfcf; color: #3c3c3c; }
.group { display: flex; flex-direction: column; height: 99px; border-right: 1px solid #d0d0d0; }
.g1 { width: 205px; padding-left: 4px; }
.g2 { width: 597px; padding-left: 7px; }
.g3 { width: 487px; padding-left: 5px; }
.g4 { width: 363px; padding-left: 5px; }
.tools { display: flex; height: 80px; }
.tool { display: flex; flex-direction: column; align-items: center; padding-top: 4px; flex: none; text-align: center; }
.tool svg { width: 32px; height: 32px; margin-bottom: 5px; flex: none; }
.tool span { margin: 0 -8px; }
.caption { text-align: center; padding-right: 6px; }
.list { margin-top: 3px; height: 75px; border-left: 1px solid #d0d0d0; padding-left: 7px; display: flex; flex-direction: column; }
.l1 { width: 156px; margin-left: 1px; }
.row { display: flex; align-items: center; gap: 4px; height: 25px; }
.row svg { width: 20px; height: 20px; }

/* work area */
.work { flex: 1; display: flex; min-height: 0; padding-top: 1px; }
.scene { flex: 1; display: flex; flex-direction: column; min-width: 0; }
.canvas { flex: 1; position: relative; overflow: hidden; background: #badfff; }
.model { position: absolute; left: 520px; top: 189px; }
.axes { position: absolute; right: 9px; bottom: 20px; font: 15px "Liberation Sans", sans-serif; }
.axis-x { font-size: 17px; }
.ruler { flex: none; height: 45px; border-top: 1px solid #52646f; background: linear-gradient(#e8f4fe, #bcdffc); }
.ticks { display: block; width: 100%; }
.marks { display: flex; padding-top: 2px; font: 16px/18px "Liberation Sans", sans-serif; color: #000; }
.marks span { width: 196px; text-align: center; }
.marks .zero { width: 95px; text-align: left; padding-left: 1px; }
.marks b { margin-left: auto; margin-right: 14px; font-size: 14px; line-height: 14px; }

/* docked panels */
.panels { width: 394px; flex: none; padding-left: 5px; overflow: hidden; color: #1a1a1a; }
.head { display: flex; align-items: center; height: 32px; padding: 0 8px 2px 11px; border-left: 1px solid #ececec; border-top: 1px solid #ececec; }
.fold { border: 6px solid transparent; border-left: 7px solid #000; border-right: 0; margin-right: 11px; }
.dots { flex: 1; height: 5px; margin: 0 10px 0 6px; background: linear-gradient(90deg, #222 1px, transparent 1px) 0 0 / 4px 1px repeat-x, linear-gradient(90deg, #222 1px, transparent 1px) 2px 2px / 4px 1px repeat-x, linear-gradient(90deg, #222 1px, transparent 1px) 0 4px / 4px 1px repeat-x; }
.x { width: 12px; font-weight: 700; font-size: 14px; }
.subtabs { display: flex; align-items: stretch; height: 25px; border-bottom: 1px solid #999; position: relative; overflow: hidden; }
.subtabs.first { height: 25px; border-bottom: 0; margin-left: 1px; }
.first .sub { border-bottom: 1px solid #999; flex: 1; text-align: left; padding: 2px 0 0 14px; }
.first .on { border: 1px solid #999; border-bottom-color: #fff; flex: 0 0 107px; text-align: center; padding: 0; }
.under { gap: 30px; padding-left: 218px; padding-top: 4px; }
.under .sub { padding-bottom: 2px; }
.build { padding-left: 211px; }
.wide { padding-left: 199px; }
.scroll { position: absolute; right: 0; top: 0; display: flex; height: 25px; background: #fff; }
.scroll button { width: 20px; border: 1px solid #999; margin-left: -1px; display: flex; align-items: center; justify-content: center; }
.prev, .next { border: 6px solid transparent; }
.prev { border-right: 7px solid #999; border-left: 0; }
.next { border-left: 7px solid #000; border-right: 0; }

/* bottom toolbar */
.bar { flex: none; display: flex; align-items: center; height: 34px; }
.bar button { width: 31px; height: 30px; display: flex; align-items: center; justify-content: center; }
.bar svg { width: 24px; height: 24px; }
.grip { width: 10px; height: 22px; background: linear-gradient(#222 2px, transparent 2px) 3px 0 / 2px 4px repeat-y; }
.drop { width: 13px; height: 30px; display: flex; align-items: center; justify-content: center; }
.drop::after { content: ""; border: 3px solid transparent; border-top: 4px solid #777; border-bottom: 0; }
.drop.dim::after { border-top-color: #c4c4c4; }
.sep { width: 6px; height: 24px; background: linear-gradient(#d4d4d4, #d4d4d4) 3px 0 / 1px 24px no-repeat; }
.hot { background: #99c9f5; }
.hot2 { background: #cce4fb; }
.status { flex: none; height: 9px; overflow: hidden; padding: 4px 5px 0; background: #2998ff; color: #111; }

/* fix wizard window */
.dialog { position: absolute; right: 172px; top: 235px; width: 770px; height: 712px; display: flex; flex-direction: column; background: #f0f0f0; border: 1px solid #a9a9a9; border-radius: 9px 9px 3px 3px; box-shadow: 0 18px 40px rgba(0, 0, 0, .28), 0 0 12px rgba(0, 0, 0, .16); }
.title { display: flex; align-items: center; height: 41px; flex: none; padding: 0 1px 4px 10px; background: #f3f3f3; border-radius: 9px 9px 0 0; }
.title h1 { flex: 1; margin: 0 0 0 5px; font-size: 14px; font-weight: 400; color: #8f8f8f; white-space: nowrap; }
.win { width: 58px; }
.win svg { width: 14px; height: 14px; display: block; margin: auto; }
.columns { flex: 1; display: flex; min-height: 0; padding: 0 9px 5px 4px; }
.pages { width: 153px; flex: none; background: #fff; border: 3px double #767676; padding: 2px 7px 0 0; font-size: 14px; line-height: 20px; color: #1a1a1a; }
.page { display: flex; align-items: center; height: 24px; width: 100%; padding-left: 4px; }
.page svg { width: 20px; height: 20px; flex: none; }
.page span { padding: 2px 0 2px 2px; flex: 1; text-align: left; }
.cur span { background: #f0f0f0; }
.pages hr { height: 1px; margin: 11px 0 12px; border: 0; background: #808080; }
.body { flex: 1; min-width: 0; display: flex; flex-direction: column; padding-left: 8px; }
.part { display: flex; align-items: flex-start; height: 41px; padding-top: 1px; }
.part label { width: 99px; padding: 0 0 0 8px; }
.combo { flex: 1; position: relative; }
.combo select { display: block; width: 100%; height: 25px; appearance: none; border: 1px solid #c9c9c9; border-bottom-color: #aaa; background: #fff; padding: 0 4px; font: inherit; color: #111; border-radius: 0; }
.combo svg { position: absolute; right: 6px; top: 9px; width: 10px; height: 6px; }
.btn { height: 31px; background: #fdfdfd; border: 1px solid #d0d0d0; border-bottom-color: #bdbdbd; border-radius: 4px; color: #111; }
.nextbtn { width: 56px; height: 28px; margin: 2px -4px 0 5px; border-color: #ececec; background: #f7f7f7; color: #8b8b8b; }
.sheet { border: 1px solid #a5a5a5; border-radius: 4px; background: linear-gradient(#fff, #fcfcfc 25%, #f0f0f0 90%); padding: 26px 12px 13px; }
fieldset { margin: 0; border: 1px solid #dcdcdc; min-width: 0; }
legend { padding: 0 3px; }
.advice { height: 94px; padding: 8px 12px 0 15px; display: flex; justify-content: space-between; margin-bottom: 5px; }
.advice legend { margin-left: -9px; }
.advice p { margin: 0; }
.vbar { width: 20px; height: 58px; background: #f0f0f0; display: flex; flex-direction: column; justify-content: space-between; align-items: center; padding: 6px 0; }
.up, .down { border: 5px solid transparent; }
.up { border-bottom: 8px solid #999; border-top: 0; }
.down { border-top: 8px solid #999; border-bottom: 0; }
.diag { height: 341px; padding: 8px 12px 0; display: flex; flex-direction: column; }
.diag legend { margin-left: -6px; }
.full { display: flex; gap: 3px; align-items: center; height: 20px; margin-bottom: 15px; }
.check { display: flex; align-items: center; height: 25px; padding-left: 25px; }
.in { padding-left: 50px; }
.nobox { padding-left: 74px; }
.check svg { width: 18px; height: 18px; margin: 0 8px; }
.nobox svg { margin-left: 0; }
.check b { width: 56px; }
input[type="checkbox"] { appearance: none; margin: 0; width: 16px; height: 16px; background: #0560b6; border-radius: 3px; display: grid; place-items: center; flex: none; }
input[type="checkbox"]::after { content: ""; width: 8px; height: 4px; margin-top: -2px; border: solid #d9ebfa; border-width: 0 0 1px 1px; transform: rotate(-45deg); }
.update { width: 139px; height: 30px; display: flex; align-items: center; padding: 0 7px 0 2px; align-self: flex-end; margin-top: 13px; flex: none; }
.btn svg { width: 20px; height: 20px; flex: none; }
.btn span { flex: 1; text-align: center; }
.actions { display: flex; justify-content: flex-end; gap: 7px; margin-top: auto; padding-right: 15px; }
.follow { width: 190px; display: flex; align-items: center; padding: 0 9px 0 3px; }
.small { width: 73px; }
.resize { position: absolute; right: 0; bottom: 0; }
```
